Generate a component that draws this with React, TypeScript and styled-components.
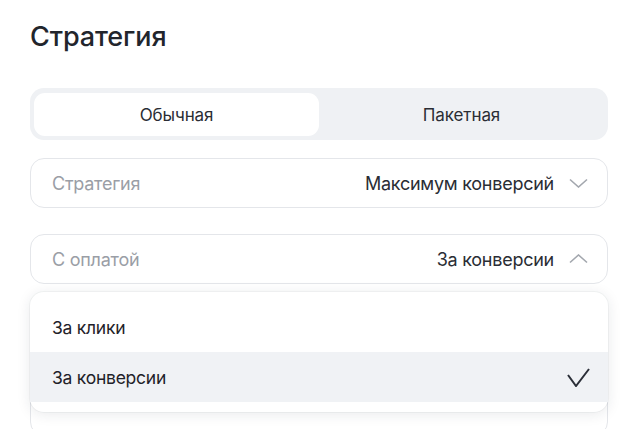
import React, { useState } from "react";
import styled, { createGlobalStyle } from "styled-components";

const GlobalStyle = createGlobalStyle`
  html, body {
    margin: 0;
    padding: 0;
    background: #ffffff;
  }
  body {
    font-family: Inter, "Noto Sans", sans-serif;
    color: #24272e;
    -webkit-font-smoothing: antialiased;
  }
`;

const Page = styled.div`
  width: 621px;
  height: 429px;
  overflow: hidden;
  box-sizing: border-box;
  padding: 21px 13px 0 30px;
`;

const Title = styled.h1`
  margin: 0 0 35px;
  font-size: 27px;
  line-height: 32px;
  font-weight: 500;
  letter-spacing: -0.1px;
  color: #22252c;
`;

const Segmented = styled.div`
  display: grid;
  grid-template-columns: 1fr 1fr;
  padding: 5px 4px 4px;
  height: 52px;
  box-sizing: border-box;
  background: #eff1f4;
  border-radius: 14px;
  margin-bottom: 18px;
`;

const Segment = styled.button<{ $active?: boolean }>`
  border: none;
  border-radius: 11px;
  background: ${(p) => (p.$active ? "#ffffff" : "transparent")};
  font-family: inherit;
  font-size: 17px;
  letter-spacing: -0.1px;
  color: #2a2d34;
  cursor: pointer;
`;

const Fields = styled.div`
  display: flex;
  flex-direction: column;
  gap: 26px;
`;

const FieldWrap = styled.div`
  position: relative;
`;

const Field = styled.div`
  height: 50px;
  flex-shrink: 0;
  box-sizing: border-box;
  border: 1px solid #e4e6ea;
  border-radius: 14px;
  background: #ffffff;
  display: flex;
  align-items: center;
  padding: 0 19px 0 21px;
  font-size: 18px;
  letter-spacing: -0.25px;
`;

const Label = styled.span`
  color: #9a9ea6;
  flex: 1;
`;

const Value = styled.span`
  color: #2a2d34;
  margin-right: 15px;
`;

const Chevron = styled.svg`
  width: 19px;
  height: 10px;
  display: block;
  stroke: #a3a7ae;
  stroke-width: 1.6;
  fill: none;
`;

const Menu = styled.ul`
  position: absolute;
  left: 0;
  right: 0;
  top: calc(100% + 8px);
  margin: 0;
  padding: 10px 0;
  list-style: none;
  background: #ffffff;
  border-radius: 14px;
  box-shadow: 0 2px 14px rgba(30, 40, 60, 0.1), 0 0 0 1px rgba(30, 40, 60, 0.04);
  z-index: 2;
`;

const Option = styled.li<{ $selected?: boolean }>`
  height: 50px;
  display: flex;
  align-items: center;
  justify-content: space-between;
  padding: 0 18px 0 22px;
  font-size: 17.5px;
  letter-spacing: -0.25px;
  color: #1f2229;
  background: ${(p) => (p.$selected ? "#f0f2f5" : "transparent")};
`;

const Check = styled.svg`
  width: 23px;
  height: 19px;
  stroke: #2b2f38;
  stroke-width: 2;
  fill: none;
`;

const ChevronDown = () => (
  <Chevron viewBox="0 0 19 10">
    <path d="M1 1.5 L9.5 9 L18 1.5" />
  </Chevron>
);

const ChevronUp = () => (
  <Chevron viewBox="0 0 19 10">
    <path d="M1 8.5 L9.5 1 L18 8.5" />
  </Chevron>
);

const payOptions = ["За клики", "За конверсии"];

export default function App() {
  const [mode, setMode] = useState("regular");
  const [pay, setPay] = useState("За конверсии");

  return (
    <>
      <GlobalStyle />
      <Page>
        <Title>Стратегия</Title>

        <Segmented>
          <Segment $active={mode === "regular"} onClick={() => setMode("regular")}>
            Обычная
          </Segment>
          <Segment $active={mode === "package"} onClick={() => setMode("package")}>
            Пакетная
          </Segment>
        </Segmented>

        <Fields>
          <Field>
            <Label>Стратегия</Label>
            <Value>Максимум конверсий</Value>
            <ChevronDown />
          </Field>

          <FieldWrap>
            <Field>
              <Label>С оплатой</Label>
              <Value>{pay}</Value>
              <ChevronUp />
            </Field>
            <Menu>
              {payOptions.map((o) => (
                <Option key={o} $selected={o === pay} onClick={() => setPay(o)}>
                  {o}
                  {o === pay && (
                    <Check viewBox="0 0 23 19">
                      <path d="M1 7 L9 18 L22 1" />
                    </Check>
                  )}
                </Option>
              ))}
            </Menu>
          </FieldWrap>

          <Field />
          <Field />
        </Fields>
      </Page>
    </>
  );
}
